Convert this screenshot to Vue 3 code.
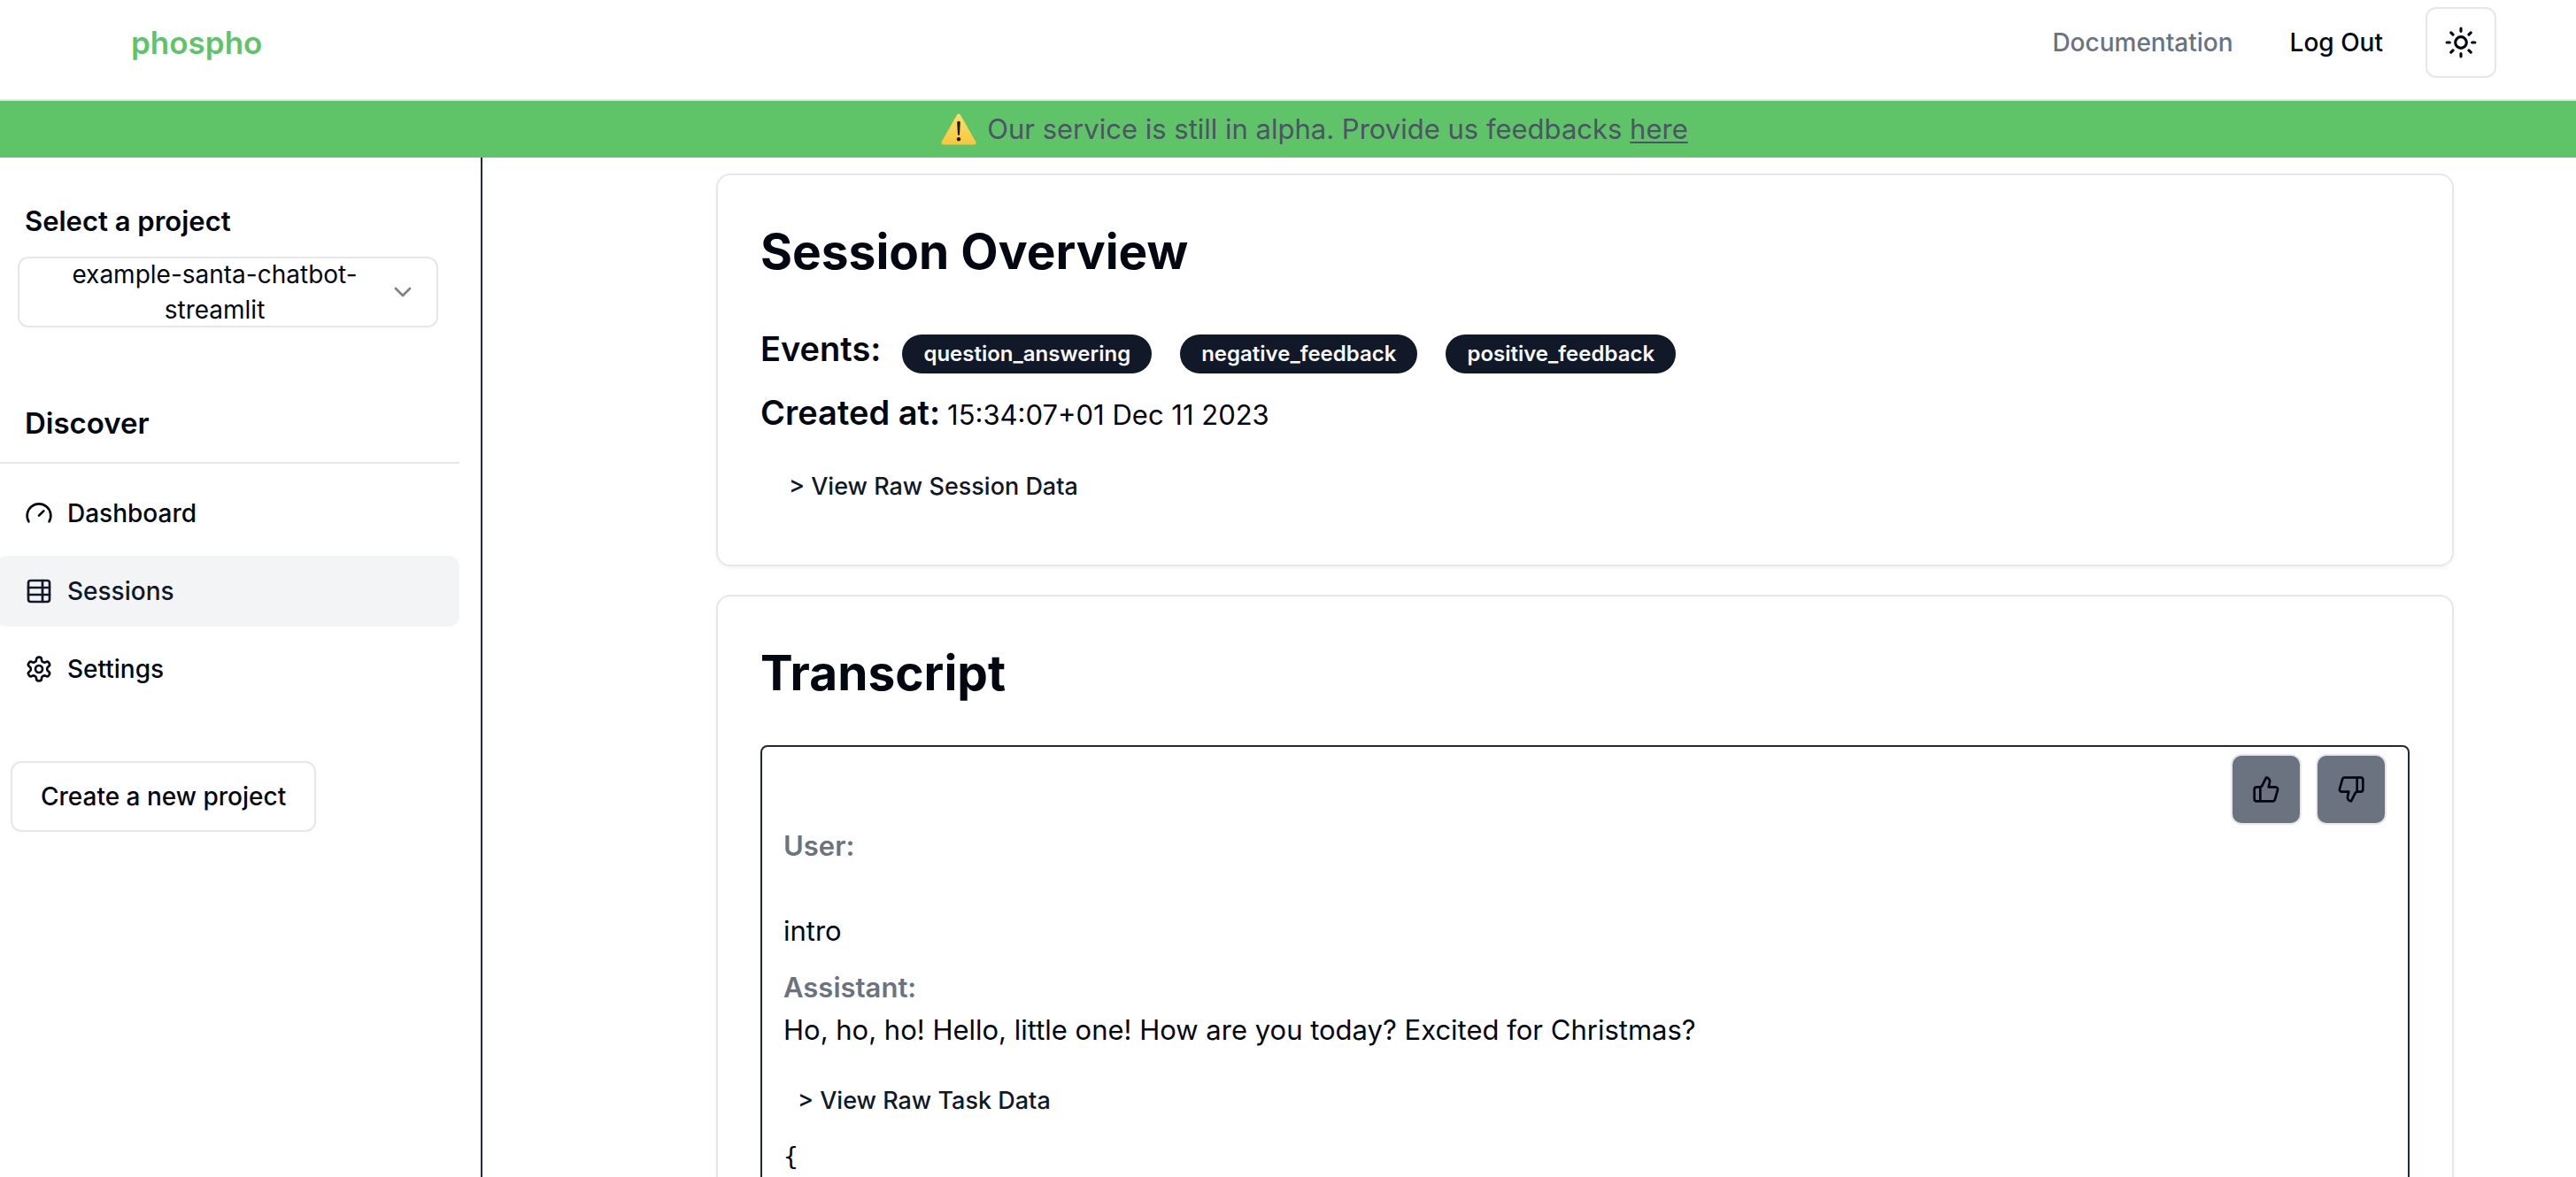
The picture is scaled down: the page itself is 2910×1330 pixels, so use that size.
<script setup>
import { ref } from 'vue'

const projects = ['example-santa-chatbot-streamlit']
const project = ref(projects[0])

const links = [
  { label: 'Dashboard', icon: 'gauge' },
  { label: 'Sessions', icon: 'table', active: true },
  { label: 'Settings', icon: 'gear' },
]

const events = ['question_answering', 'negative_feedback', 'positive_feedback']
</script>

<template>
  <div class="page">
    <header class="topbar">
      <a class="logo" href="#">phospho</a>
      <nav class="topnav">
        <a class="doc-link" href="#">Documentation</a>
        <a class="logout" href="#">Log Out</a>
        <button class="icon-button" type="button" aria-label="Toggle theme">
          <svg class="sun" viewBox="0 0 24 24" aria-hidden="true">
            <circle cx="12" cy="12" r="4" />
            <path d="M12 2v2M12 20v2M4.93 4.93l1.41 1.41M17.66 17.66l1.41 1.41M2 12h2M20 12h2M6.34 17.66l-1.41 1.41M19.07 4.93l-1.41 1.41" />
          </svg>
        </button>
      </nav>
    </header>

    <div class="banner">
      <svg class="warning" viewBox="0 0 40 36" aria-hidden="true">
        <defs>
          <linearGradient id="warning-fill" x1="0" y1="0" x2="0" y2="1">
            <stop offset="0" stop-color="#fbe26a" />
            <stop offset="1" stop-color="#f8c63f" />
          </linearGradient>
        </defs>
        <path class="warning-body" d="M17.8 2.2Q20-1.2 22.2 2.2L39.2 32Q40.6 35.5 37 35.5H3Q-.6 35.5.8 32Z" />
        <path class="warning-mark" d="M18.2 10Q20 7.6 21.8 10L21 24.3Q20 25.6 19 24.3Z" />
        <circle class="warning-mark" cx="20" cy="29.2" r="2.2" />
      </svg>
      <p class="banner-text">
        Our service is still in alpha. Provide us feedbacks <a href="#">here</a>
      </p>
    </div>

    <div class="body">
      <aside class="sidebar">
        <label class="side-title" for="project">Select a project</label>
        <div class="picker">
          <span class="picker-value">{{ project }}</span>
          <svg class="icon chevron" viewBox="0 0 24 24" aria-hidden="true">
            <path d="m6 9 6 6 6-6" />
          </svg>
          <select id="project" v-model="project" class="picker-select">
            <option v-for="name in projects" :key="name" :value="name">{{ name }}</option>
          </select>
        </div>

        <h2 class="side-heading">Discover</h2>
        <nav class="side-nav">
          <a
            v-for="link in links"
            :key="link.label"
            class="side-link"
            :class="{ active: link.active }"
            href="#"
          >
            <svg class="icon" viewBox="0 0 24 24" aria-hidden="true">
              <path v-if="link.icon === 'gauge'" d="m12 14 4-4M3.34 19a10 10 0 1 1 17.32 0" />
              <template v-else-if="link.icon === 'table'">
                <rect x="3" y="3" width="18" height="18" rx="2" />
                <path d="M3 9h18M3 15h18M15 3v18" />
              </template>
              <template v-else>
                <path d="M12.22 2h-.44a2 2 0 0 0-2 2v.18a2 2 0 0 1-1 1.73l-.43.25a2 2 0 0 1-2 0l-.15-.08a2 2 0 0 0-2.73.73l-.22.38a2 2 0 0 0 .73 2.73l.15.1a2 2 0 0 1 1 1.72v.51a2 2 0 0 1-1 1.74l-.15.09a2 2 0 0 0-.73 2.73l.22.38a2 2 0 0 0 2.73.73l.15-.08a2 2 0 0 1 2 0l.43.25a2 2 0 0 1 1 1.73V20a2 2 0 0 0 2 2h.44a2 2 0 0 0 2-2v-.18a2 2 0 0 1 1-1.73l.43-.25a2 2 0 0 1 2 0l.15.08a2 2 0 0 0 2.73-.73l.22-.39a2 2 0 0 0-.73-2.73l-.15-.08a2 2 0 0 1-1-1.74v-.5a2 2 0 0 1 1-1.74l.15-.09a2 2 0 0 0 .73-2.73l-.22-.38a2 2 0 0 0-2.73-.73l-.15.08a2 2 0 0 1-2 0l-.43-.25a2 2 0 0 1-1-1.73V4a2 2 0 0 0-2-2z" />
                <circle cx="12" cy="12" r="3" />
              </template>
            </svg>
            <span>{{ link.label }}</span>
          </a>
        </nav>
        <button class="create" type="button">Create a new project</button>
      </aside>

      <main class="content">
        <section class="card">
          <h1 class="card-title">Session Overview</h1>
          <div class="events">
            <h2 class="field">Events:</h2>
            <ul class="badges">
              <li v-for="event in events" :key="event" class="badge">{{ event }}</li>
            </ul>
          </div>
          <div class="created">
            <h2 class="field">Created at:</h2>
            <span class="date">15:34:07+01 Dec 11 2023</span>
          </div>
          <button class="raw raw-session" type="button">&gt; View Raw Session Data</button>
        </section>

        <section class="card">
          <h1 class="card-title">Transcript</h1>
          <article class="task">
            <div class="votes">
              <button class="vote" type="button" aria-label="Thumbs up">
                <svg class="icon" viewBox="0 0 24 24" aria-hidden="true">
                  <path d="M7 10v12M15 5.88 14 10h5.83a2 2 0 0 1 1.92 2.56l-2.33 8A2 2 0 0 1 17.5 22H4a2 2 0 0 1-2-2v-8a2 2 0 0 1 2-2h2.76a2 2 0 0 0 1.79-1.11L12 2a3.13 3.13 0 0 1 3 3.88Z" />
                </svg>
              </button>
              <button class="vote" type="button" aria-label="Thumbs down">
                <svg class="icon" viewBox="0 0 24 24" aria-hidden="true">
                  <path d="M17 14V2M9 18.12 10 14H4.17a2 2 0 0 1-1.92-2.56l2.33-8A2 2 0 0 1 6.5 2H20a2 2 0 0 1 2 2v8a2 2 0 0 1-2 2h-2.76a2 2 0 0 0-1.79 1.11L12 22a3.13 3.13 0 0 1-3-3.88Z" />
                </svg>
              </button>
            </div>
            <h3 class="speaker">User:</h3>
            <p class="message user-message">intro</p>
            <h3 class="speaker assistant">Assistant:</h3>
            <p class="message">Ho, ho, ho! Hello, little one! How are you today? Excited for Christmas?</p>
            <button class="raw raw-task" type="button">&gt; View Raw Task Data</button>
            <pre class="json">{</pre>
          </article>
        </section>
      </main>
    </div>
  </div>
</template>

<style>
body {
  margin: 0;
  background: #fff;
}
</style>

<style scoped>
.page {
  display: flex;
  flex-direction: column;
  height: 100vh;
  overflow: hidden;
  color: #030711;
  font-family: Inter, "Liberation Sans", sans-serif;
  font-size: 28px;
  line-height: 40px;
}

h1, h2, h3, p, ul, pre {
  margin: 0;
  padding: 0;
}

a {
  color: inherit;
  text-decoration: none;
}

button {
  box-sizing: border-box;
  padding: 0;
  border: 0;
  background: transparent;
  color: inherit;
  font: inherit;
  font-weight: 500;
  cursor: pointer;
}

svg {
  flex: none;
  fill: none;
  stroke: currentColor;
  stroke-width: 2;
  stroke-linecap: round;
  stroke-linejoin: round;
}

.icon {
  width: 32px;
  height: 32px;
}

.topbar {
  display: flex;
  flex: none;
  align-items: center;
  justify-content: space-between;
  padding: 8px 90px 24px 148px;
  border-bottom: 2px solid #e5e7eb;
}

.logo {
  color: #5fc468;
  font-size: 35px;
  font-weight: 600;
}

.topnav {
  display: flex;
  align-items: center;
  font-weight: 500;
}

.doc-link {
  margin-right: 64px;
  color: #6b7280;
}

.logout {
  margin-right: 48px;
}

.icon-button {
  display: flex;
  align-items: center;
  justify-content: center;
  width: 80px;
  height: 80px;
  border: 2px solid #e5e7eb;
  border-radius: 12px;
}

.sun {
  width: 38px;
  height: 38px;
}

.banner {
  display: flex;
  flex: none;
  align-items: center;
  justify-content: center;
  gap: 12px;
  height: 64px;
  padding-left: 60px;
  background: #5fc468;
  color: #4b5563;
  font-size: 31px;
}

.banner a {
  text-decoration: underline;
  text-decoration-thickness: 2px;
  text-underline-offset: 3px;
}

.warning {
  width: 40px;
  height: 36px;
  stroke: none;
}

.warning-body {
  fill: url(#warning-fill);
}

.warning-mark {
  fill: #1c1a10;
}

.body {
  display: flex;
  flex: 1;
  min-height: 0;
}

.sidebar {
  box-sizing: border-box;
  flex: none;
  width: 545px;
  padding: 52px 24px 0 0;
  border-right: 2px solid #1f2937;
}

.side-title {
  display: block;
  padding-left: 28px;
  font-size: 31px;
  font-weight: 600;
}

.picker {
  position: relative;
  display: flex;
  box-sizing: border-box;
  align-items: center;
  min-height: 80px;
  margin: 20px 24px 0 20px;
  padding: 0 22px 0 24px;
  border: 2px solid #e5e7eb;
  border-radius: 12px;
}

.picker-value {
  flex: 1;
  margin: -2px 0;
  text-align: center;
}

.chevron {
  opacity: 0.5;
}

.picker-select {
  position: absolute;
  inset: 0;
  width: 100%;
  opacity: 0;
  cursor: pointer;
}

.side-heading {
  margin-top: 84px;
  padding: 0 0 20px 28px;
  border-bottom: 2px solid #e5e7eb;
  font-size: 33px;
  font-weight: 600;
  line-height: 48px;
}

.side-nav {
  display: flex;
  flex-direction: column;
  gap: 8px;
  margin: 16px 0 0 -4px;
}

.side-link {
  display: flex;
  align-items: center;
  gap: 16px;
  height: 80px;
  padding-left: 32px;
  border-radius: 12px;
  font-weight: 500;
}

.side-link.active {
  background: #f3f4f6;
  color: #111827;
}

.create {
  height: 80px;
  margin: 64px 0 0 12px;
  padding: 0 32px;
  border: 2px solid #e5e7eb;
  border-radius: 12px;
}

.content {
  display: flex;
  flex: 1;
  flex-direction: column;
  gap: 32px;
  min-width: 0;
  padding: 18px 138px 0 264px;
  overflow: hidden;
}

.card {
  flex: none;
  padding: 48px;
  border: 2px solid #e5e7eb;
  border-radius: 16px;
  box-shadow: 0 2px 4px rgb(0 0 0 / 5%);
}

.card-title {
  margin-bottom: 44px;
  font-size: 55px;
  font-weight: 700;
  line-height: 76px;
}

.events,
.created {
  display: flex;
  align-items: baseline;
}

.field {
  font-size: 38px;
  font-weight: 600;
  line-height: 56px;
}

.badges {
  display: flex;
  gap: 32px;
  margin-left: 24px;
  list-style: none;
}

.badge {
  padding: 0 24px;
  border-radius: 22px;
  background: #111827;
  color: #f9fafb;
  font-size: 24px;
  font-weight: 600;
  line-height: 44px;
}

.created {
  gap: 8px;
  margin-top: 16px;
}

.date {
  font-size: 31px;
}

.raw {
  display: block;
  height: 80px;
  margin-top: 16px;
  color: #111827;
  font-size: 27px;
}

.raw-session {
  padding: 0 32px;
}

.raw-task {
  padding: 0 16px;
}

.task {
  padding: 8px 24px 48px;
  border: 2px solid #1f2937;
  border-radius: 8px;
  font-size: 31px;
  line-height: 48px;
}

.votes {
  display: flex;
  justify-content: flex-end;
  gap: 16px;
}

.vote {
  display: flex;
  align-items: center;
  justify-content: center;
  width: 80px;
  height: 80px;
  border: 2px solid #e5e7eb;
  border-radius: 12px;
  background: #6b7280;
}

.speaker {
  color: #6b7280;
  font-size: 31px;
  font-weight: 600;
}

.user-message {
  margin-top: 48px;
}

.assistant {
  margin-top: 16px;
}

.json {
  font-family: "DejaVu Sans Mono", monospace;
  font-size: 28px;
}
</style>
